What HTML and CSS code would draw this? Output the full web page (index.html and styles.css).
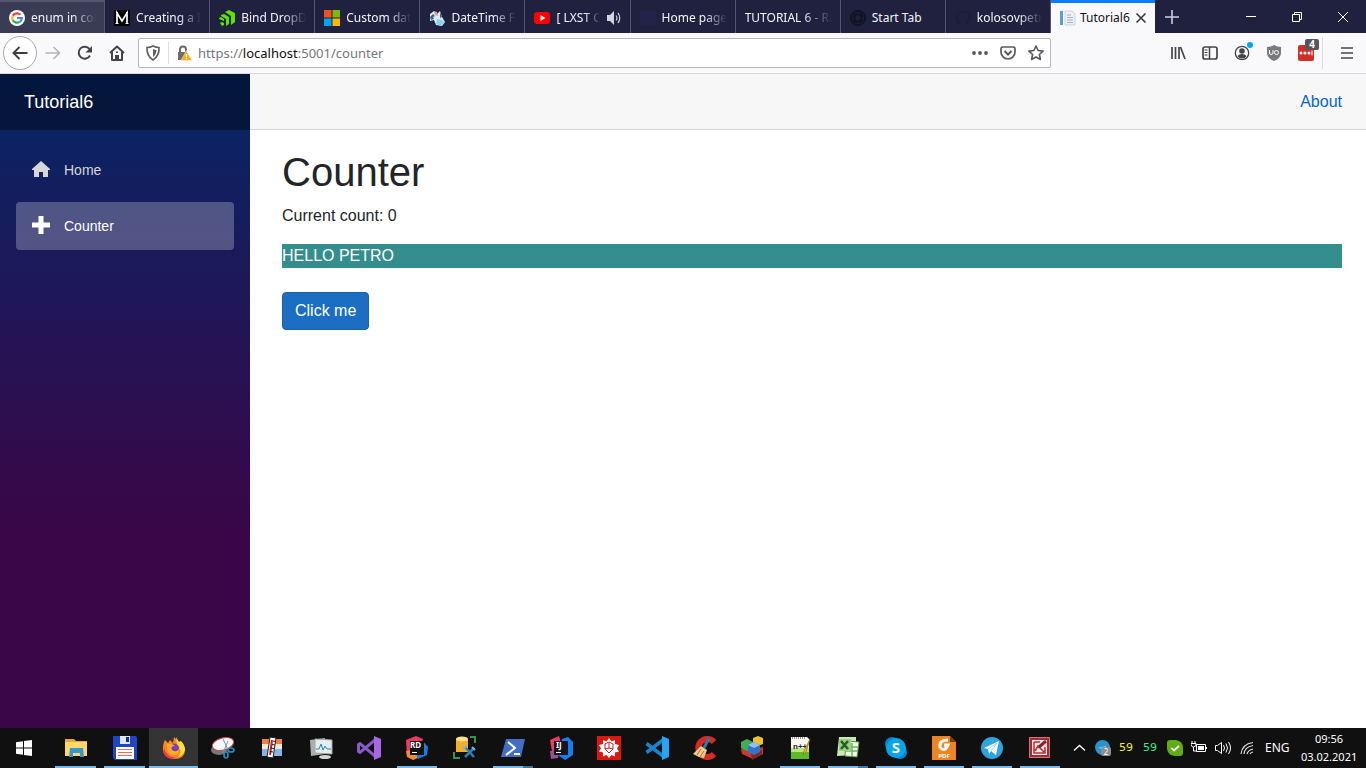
FILE: index.html
```html
<!DOCTYPE html>
<html lang="en">
<head>
<meta charset="utf-8">
<title>Tutorial6</title>
<link rel="stylesheet" href="styles.css">
</head>
<body>
<header class="browser">
  <div class="titlebar">
    <nav class="tabs" aria-label="Open tabs">
      <button class="tab tab-hover"><svg class="fav" viewBox="0 0 16 16"><circle cx="8" cy="8" r="8" fill="#fff"/><g fill="none" stroke-width="2.2"><path d="M3.8 5.8A4.8 4.8 0 0 1 11.4 4.7" stroke="#ea4335"/><path d="M3.8 5.8A4.8 4.8 0 0 0 3.8 10.2" stroke="#fbbc05"/><path d="M3.8 10.2A4.8 4.8 0 0 0 11.2 11.5" stroke="#34a853"/><path d="M11.2 11.5A4.8 4.8 0 0 0 12.8 8H8" stroke="#4285f4"/></g></svg><span class="label">enum in con</span></button>
      <button class="tab"><svg class="fav" viewBox="0 0 16 16"><path fill="#050505" d="M0 0h16v16H0z"/><path d="M3 14V3l5 8 5-8v11" fill="none" stroke="#fff" stroke-width="1.700"/><path d="M1.500 13.500h3m7 0h3M2 2.500h2m8 0h2" stroke="#fff"/></svg><span class="label">Creating a In</span></button>
      <button class="tab"><svg class="fav" viewBox="0 0 16 16"><path fill="#5ce500" d="M6 2 10 0l6 3v9l-4 3V6zM2 5l3-1 5 3v7l-3 2V9L2 6zM0 8l2-1 3 2v2L0 9zM1 13l2-1 2 1v2l-2 1z"/></svg><span class="label">Bind DropDo</span></button>
      <button class="tab"><svg class="fav" viewBox="0 0 16 16"><path fill="#f25022" d="M0 0h7.500v7.500H0z"/><path fill="#7fba00" d="M8.500 0H16v7.500H8.500z"/><path fill="#00a4ef" d="M0 8.500h7.500V16H0z"/><path fill="#ffb900" d="M8.500 8.500H16V16H8.500z"/></svg><span class="label">Custom dat</span></button>
      <button class="tab"><svg class="fav" viewBox="0 0 16 16"><path fill="#dceaf4" d="M1 4 5 1l3 3 3-3 2 6 3 5-3 4-6-1-2-5-4 1z"/><path fill="#e49882" d="m5 1 3 1 1 4-3-1z"/><path fill="#38618a" d="m1 7 3-3 2 2-2 1 1 2-3 1zM11 2l2 5-2 1z"/><path fill="#8bd0ee" d="m8 9 5 1 2 2-3 4-5-2z"/></svg><span class="label">DateTime Fo</span></button>
      <button class="tab"><svg class="fav" viewBox="0 0 16 16"><rect y="2" width="16" height="12" rx="3" fill="red"/><path fill="#fff" d="m6.500 5 5 3-5 3z"/></svg><span class="label">[ LXST CX</span><svg class="sound" viewBox="0 0 16 16"><path fill="#d4d4df" d="M1 5h3l4-4v14l-4-4H1z"/><path d="M10 5.500q2 2.500 0 5M12 3q3.500 5 0 10" fill="none" stroke="#d4d4df" stroke-width="1.200"/></svg></button>
      <button class="tab"><svg class="fav" viewBox="0 0 16 16"><path fill="#21234a" d="M0 1h16v14H0z"/></svg><span class="label">Home page</span></button>
      <button class="tab"><span class="label">TUTORIAL 6 - Ra</span></button>
      <button class="tab"><svg class="fav" viewBox="0 0 16 16" fill="none" stroke="#10111f"><circle cx="8" cy="8" r="7.300" stroke-width="1.300"/><ellipse cx="8" cy="8" rx="3" ry="7"/><ellipse cx="8" cy="8" rx="7" ry="3"/><rect x="4" y="4" width="8" height="8"/></svg><span class="label full">Start Tab</span></button>
      <button class="tab"><svg class="fav" viewBox="0 0 16 16"><path fill="#1d1f30" d="M5.500 15v-3c-2 .5-3-.5-3.500-1.500 1.500.3 2 1.200 3.500.7l.5-1C3 9.500 2 8 2.500 5.500L3 4V2l2 1h6l2-1v2l.5 2c0 2.500-1 3.700-3.500 4.200l.5 1V15A7.500 7.500 0 1 0 5.500 15"/></svg><span class="label">kolosovpetr</span></button>
      <button class="tab tab-active"><svg class="fav" viewBox="0 0 16 16"><path fill="#5d9fc8" d="M0 1h3v14H0z"/><path fill="#edf1f6" stroke="#b7c5d1" stroke-width=".7" d="M5 1h7l3 3v11H5z"/><path stroke="#9db2c3" d="M7 5h4M7 7.500h6M7 10h6M7 12.500h6"/></svg><span class="label full">Tutorial6</span><svg class="close" viewBox="0 0 12 12"><path d="m1.500 1.500 9 9m0-9-9 9" stroke="#333" stroke-width="1.500"/></svg></button>
    </nav>
    <button class="newtab" aria-label="New tab"><svg viewBox="0 0 14 14"><path d="M7 0v14M0 7h14" stroke="#ceced9" stroke-width="1.600"/></svg></button>
    <div class="window">
      <button aria-label="Minimize"><svg viewBox="0 0 10 10"><path d="M0 4.500h10" stroke="#fff"/></svg></button>
      <button aria-label="Restore"><svg viewBox="0 0 10 10"><path d="M.5 2.500h7v7h-7zM2.500 2V.5h7v7H8" fill="none" stroke="#fff"/></svg></button>
      <button aria-label="Close"><svg viewBox="0 0 10 10"><path d="m0 0 10 10M10 0 0 10" stroke="#fff"/></svg></button>
    </div>
  </div>
  <div class="toolbar">
    <button class="tool back" aria-label="Back"><svg viewBox="0 0 16 16"><path d="M15.500 8H1.500M7.500 2 1.500 8l6 6" fill="none" stroke="#3d3d40" stroke-width="1.900"/></svg></button>
    <button class="tool" aria-label="Forward"><svg viewBox="0 0 16 16"><path d="M.5 8h14M8.500 2l6 6-6 6" fill="none" stroke="#b5b5b8" stroke-width="1.600"/></svg></button>
    <button class="tool" aria-label="Reload"><svg viewBox="0 0 16 16"><path d="M13 10.500A6 6 0 1 1 12.500 4" fill="none" stroke="#454548" stroke-width="2"/><path fill="#454548" d="M15 1v6.500H8.500z"/></svg></button>
    <button class="tool" aria-label="Home"><svg viewBox="0 0 16 16"><path d="m1 8 7-6.500L15 8M3 7v8h10V7" fill="none" stroke="#454548" stroke-width="2" stroke-linejoin="round"/><path fill="#454548" d="M6 15v-5h4v5zM7 6.500h2V8H7z"/></svg></button>
    <form class="address">
      <svg class="shield" viewBox="0 0 16 16"><path d="M8 1q3 1.500 6 1.500Q14.500 11 8 15 1.500 11 2 2.500 5 2.500 8 1z" fill="none" stroke="#626266" stroke-width="1.700"/><path fill="#626266" d="M8 4q2 .8 3.500 1-.3 5-3.500 7z"/></svg>
      <span class="rule"></span>
      <svg class="lock" viewBox="0 0 16 16"><path d="M4 7V4.500a3 3 0 0 1 6 0V7" fill="none" stroke="#6b6b70" stroke-width="2"/><path fill="#6b6b70" d="M2 7h9l-3 8H2z"/><path fill="#ffad14" stroke="#fff" stroke-width=".5" d="m10.500 5.500 5.500 10H5z"/><path d="M10.500 9v3m0 1v1.300" stroke="#fff" stroke-width="1.300"/></svg>
      <label class="url" for="url">https://<b>localhost</b>:5001/counter</label>
      <input id="url" class="entry" type="text" aria-label="Address">
      <svg viewBox="0 0 16 16" fill="#59595d"><circle cx="2" cy="8" r="1.900"/><circle cx="8" cy="8" r="1.900"/><circle cx="14" cy="8" r="1.900"/></svg>
      <svg viewBox="0 0 16 16" fill="none" stroke="#59595d" stroke-width="1.700"><path d="M2.500 2h11Q15 2 15 3.500V7A7 7 0 0 1 1 7V3.500Q1 2 2.500 2z"/><path d="m4.500 6 3.500 3.500L11.500 6" stroke-width="2"/></svg>
      <svg viewBox="0 0 16 16" fill="none" stroke="#59595d" stroke-width="1.600" stroke-linejoin="round"><path d="m8 1 2.100 4.500 5 .6-3.700 3.400 1 5L8 12l-4.400 2.500 1-5L.9 6.100l5-.6z"/></svg>
    </form>
    <div class="extensions">
      <button class="tool" aria-label="Library"><svg viewBox="0 0 16 16"><path d="M2 2v12M5.500 2v12M9 2v12M10.500 2 15 14" stroke="#454548" stroke-width="1.700"/></svg></button>
      <button class="tool" aria-label="Sidebars"><svg viewBox="0 0 16 16" fill="none" stroke="#454548"><rect x="1" y="2" width="14" height="12" rx="2" stroke-width="1.700"/><path d="M7.500 2v12" stroke-width="1.500"/><path d="M2.500 5h3m-3 2.500h3m-3 2.500h3"/></svg></button>
      <button class="tool" aria-label="Account"><svg viewBox="0 0 16 16"><circle cx="8" cy="8" r="6.700" fill="none" stroke="#454548" stroke-width="1.300"/><circle cx="8" cy="6" r="2.800" fill="#454548"/><path fill="#454548" d="M3.500 11Q5 9 8 9t4.500 2Q11 13.500 8 13.500T3.500 11"/></svg><span class="dot"></span></button>
      <button class="tool" aria-label="uBlock Origin"><svg viewBox="0 0 16 16"><path fill="#7a7a7d" d="M8 0q3 2 7 2v6q0 5-7 8-7-3-7-8V2q4 0 7-2"/><path d="M3.500 5v3q0 1.500 1.700 1.500T7 8V5" fill="none" stroke="#fff"/><circle cx="10.500" cy="7.500" r="2" fill="none" stroke="#fff"/></svg></button>
      <button class="tool" aria-label="LastPass"><svg viewBox="0 0 16 16"><rect width="16" height="16" rx="2" fill="#d32d27"/><g fill="#fff"><circle cx="3" cy="8" r="1.500"/><circle cx="7" cy="8" r="1.500"/><circle cx="11" cy="8" r="1.500"/><path d="M13.500 5.500h1v5h-1z"/></g></svg><span class="badge">4</span></button>
      <button class="tool menu" aria-label="Menu"><svg viewBox="0 0 16 16"><path d="M2 3h12M2 8h12M2 13h12" stroke="#454548" stroke-width="1.700"/></svg></button>
    </div>
  </div>
</header>
<div class="page">
  <aside class="sidebar">
    <div class="brandbar"><a class="brand" href="#">Tutorial6</a></div>
    <nav class="sidenav">
      <a class="navlink" href="#"><svg viewBox="0 0 18 18"><path fill="currentColor" d="m9 1 9 8v1h-2v7h-5v-5H7v5H2v-7H0V9z"/></svg>Home</a>
      <a class="navlink current" href="#"><svg viewBox="0 0 18 18"><path fill="currentColor" d="M6.500 0h5v6.500H18v5h-6.500V18h-5v-6.500H0v-5h6.500z"/></svg>Counter</a>
    </nav>
  </aside>
  <main class="main">
    <div class="topbar"><a href="#">About</a></div>
    <div class="content">
      <h1>Counter</h1>
      <p>Current count: 0</p>
      <div class="hello">HELLO PETRO</div>
      <button class="primary">Click me</button>
    </div>
  </main>
</div>
<footer class="taskbar">
  <button class="start" aria-label="Start"><svg viewBox="0 0 16 16"><path fill="#fff" d="m0 2.200 7-1v6.300H0zM8 1l8-1v7.500H8zM0 8.500h7v6.300l-7-1zM8 8.500h8V16l-8-1z"/></svg></button>
  <div class="apps">
    <button class="app wide open" aria-label="File Explorer"><svg viewBox="0 0 24 24"><path fill="#e7a82d" d="M1 3h9l2 2h11v8H1z"/><path fill="#ffd76a" d="M1 6h22v14H1z"/><path fill="#3796ce" d="M6 12h13l1 9h-4v-4H9v4H5z"/></svg></button>
    <button class="app wide open" aria-label="Total Commander"><svg viewBox="0 0 24 24"><path fill="#1d45c5" d="M0 0h23l1 2v22H2l-2-2z"/><path fill="#dce7f4" d="M7 0h10v8H7z"/><path fill="#173078" d="M13 1h3v5h-3z"/><path fill="#fff" d="M3 11h18v12H3z"/><path stroke="#e46b68" d="M5 13.500h14M5 16.500h14M5 19.500h14"/></svg></button>
    <button class="app wide active" aria-label="Firefox"><svg viewBox="0 0 24 24"><path fill="#ff8720" d="m3 4 3 3 2-3 3 3 1-6q3 2 4 6l2-2q5 4 5 9 0 9-11 9Q1 22 1 13 1 7 3 4"/><path fill="#ffdf42" d="m14 1 3 5 2-1q4 4 4 9-2 6-7 7 5-6-1-13z"/><path fill="#f3374c" d="M2 10q1 11 13 12Q5 25 2 17z"/><circle cx="12" cy="12.500" r="5" fill="#7b3bc2"/><path fill="#ffab25" d="M5 8h5l3 2q-5 0-3 4 4 3 7-1 0 7-7 6-6-3-5-11"/></svg></button>
    <button class="app wide" aria-label="Snipping Tool"><svg viewBox="0 0 24 24"><ellipse cx="8" cy="14" rx="8" ry="5" fill="#777"/><ellipse cx="12" cy="8" rx="11" ry="6" transform="rotate(-15 12 8)" fill="#f8f8f8" stroke="#c84c52"/><path d="m12 3 6 13M17 5l-5 12" stroke="#81929e"/><g fill="none" stroke="#248dbe" stroke-width="1.700"><ellipse cx="15" cy="19" rx="2" ry="3"/><ellipse cx="20" cy="14" rx="3" ry="2"/></g></svg></button>
    <button class="app wide" aria-label="Temperature monitor"><svg viewBox="0 0 24 24"><path fill="#f47e3e" d="M2 3h20v7H2z"/><path fill="#f2e9dc" d="M2 8h20v5H2z"/><path fill="#83b5e5" d="M2 13h20v7H2z"/><path fill="#fff" stroke="#222" d="m10 1 6 1-3 20-6-1z"/><path d="m12 4-2 15" stroke="#cb1c21" stroke-width="2"/><path d="m13 5 3 .5m-4 3 3 .5m-4 3 3 .5m-4 3 3 .5" stroke="#222"/></svg></button>
    <button class="app wide" aria-label="Performance"><svg viewBox="0 0 24 24"><path fill="#aab0b0" d="m1 4 15-2v16L2 20z"/><path fill="#e7edef" stroke="#a5a5a2" d="m6 3 17 1v14l-17-1z"/><path d="M7 13h3l2-5 2 6 2-4 2 3h4" fill="none" stroke="#268aa8"/><ellipse cx="16" cy="21" rx="6" ry="2" fill="#d4d6d5"/></svg></button>
    <button class="app" aria-label="Visual Studio"><svg viewBox="0 0 24 24"><path d="M18 4 3 16.500l-1.500-1v-7L3 7.500 18 20" fill="none" stroke="#865ac8" stroke-width="3"/><path fill="#a867e5" d="m17 0 7 3v18l-7 3z"/></svg></button>
    <button class="app open" aria-label="Rider"><svg viewBox="0 0 24 24"><path fill="#f33662" d="m1 4 10-4 7 3-9 21-7-4z"/><path fill="#ef8b33" d="m1 15 8-2 4 9-5 2-6-3z"/><path fill="#167ee6" d="m17 4 6 7-1 8-9 4-2-6z"/><path fill="#111" d="M5 5h14v14H5z"/><text x="5" y="12" class="jb">RD</text><path fill="#fff" d="M7 16h5v1H7z"/></svg></button>
    <button class="app" aria-label="SQL Tools"><svg viewBox="0 0 24 24"><path d="M1 16v6h6M17 1h5v6" fill="none" stroke="#3a944f" stroke-width="2"/><path fill="#f2ae28" d="M3 3h12v13H3z"/><ellipse cx="9" cy="3" rx="6" ry="2.500" fill="#ffe18c"/><path d="m12 11 9 10M21 12l-9 9" stroke="#2981bc" stroke-width="2.500"/><path d="m10 13 4-3M19 11l3 3" stroke="#6cb8db" stroke-width="2"/></svg></button>
    <button class="app open multi" aria-label="PowerShell"><svg viewBox="0 0 24 24"><path fill="#426fc4" d="M5 3h19l-4 18H0z"/><path d="m7 6 7 6-9 7M13 18h6" fill="none" stroke="#fff" stroke-width="2"/></svg></button>
    <button class="app" aria-label="IntelliJ IDEA"><svg viewBox="0 0 24 24"><path fill="#f43d65" d="m1 4 9-4 4 14-11 1z"/><path fill="#985391" d="m1 15 10-1-2 8-7 1z"/><path fill="#177ff3" d="m13 3 6-2 5 5v13l-8 5-6-4z"/><path fill="#171519" d="M5 5h14v14H5z"/><text x="7" y="12" class="jb">IJ</text><path fill="#fff" d="M7 16h5v1H7z"/></svg></button>
    <button class="app" aria-label="Mathematica"><svg viewBox="0 0 24 24"><path fill="#db1710" d="M0 0h24v24H0z"/><path fill="#fff" d="m12 2 2.500 3.500L18 4v4l4 1-2 3.500 2 3-4 1v4l-3.500-1.500L12 22l-2.500-3L6 20.500v-4l-4-1 2-3L2 9l4-1V4l3.500 1.500z"/><path d="m8 8 4-2 4 2v5l-4 4-4-4zM12 7v5m-4 1 4-1 4 1" fill="none" stroke="#c91d19"/></svg></button>
    <button class="app" aria-label="Visual Studio Code"><svg viewBox="0 0 24 24"><path d="M18 4 1.500 16.500M1.500 7.500 18 20" stroke="#1687cc" stroke-width="3.500"/><path fill="#29a4f2" d="m17 0 7 3v18l-7 3z"/></svg></button>
    <button class="app" aria-label="CCleaner"><svg viewBox="0 0 24 24"><path d="M21 6A9 9 0 1 0 21 18" fill="none" stroke="#d32b26" stroke-width="6"/><path d="m16 2-5 10" stroke="#287da6" stroke-width="3"/><path fill="#f0cb8e" d="m8 10 6 4-3 8-5-1-6-3z"/><path stroke="#a86f42" d="m8 13-4 6m7-4-4 6"/></svg></button>
    <button class="app" aria-label="Registry Editor"><svg viewBox="0 0 24 24"><path fill="#c93831" d="m1 13 7-3 7 3 8-2v7l-10 5-11-5z"/><path fill="#7d2928" d="m11 18 11-4v4l-10 6z"/><path fill="#43ad51" d="m1 6 6-3 6 3v6l-6 3-6-3z"/><path fill="#efc12d" d="m13 2 5-2 5 2v6l-5 2-5-3z"/><path fill="#3672c8" d="m8 9 6-3 6 3v7l-6 3-6-3z"/><path fill="#8fc2f5" d="m8 9 6-3 6 3-6 3z"/></svg></button>
    <button class="app open" aria-label="Notepad++"><svg viewBox="0 0 24 24"><path fill="#f7f7f0" d="M3 1h16l2 2v20H3z"/><path fill="#b7e87b" d="M3 12h18v4H3z"/><path fill="#5dbb26" d="M3 16h18v7H3z"/><path stroke="#444" stroke-dasharray="1 1" d="M4 2h14"/><text x="5" y="13" class="npp">n++</text><path d="m22 3-6 12-1 4 3-3z" fill="#f1b839" stroke="#8f6524" stroke-width=".7"/></svg></button>
    <button class="app open multi" aria-label="Excel"><svg viewBox="0 0 24 24"><path fill="#c9e8b6" d="M3 1h17v18l-19 1z"/><path fill="#eef8e8" stroke="#559440" d="m10 5 13 1-2 15-12-1z"/><path d="M10 11h12m-12 4h12m-6-8v13" stroke="#76ae65" stroke-width="1.500"/><path fill="#9bd080" d="M3 3h12v12H3z"/><path d="m5 5 7 8m0-8-7 8" stroke="#285c22" stroke-width="2.500"/></svg></button>
    <button class="app open" aria-label="Skype"><svg viewBox="0 0 24 24"><circle cx="8" cy="8" r="7" fill="#0680cc"/><circle cx="16" cy="16" r="7" fill="#0684cf"/><circle cx="12" cy="12" r="10" fill="#05a7e8"/><text x="12" y="17" class="skype">S</text></svg></button>
    <button class="app open" aria-label="Foxit PDF"><svg viewBox="0 0 24 24"><path fill="#ee8523" d="M0 0h18l6 6v18H0z"/><path fill="#7b3d12" d="M18 0v6h6z"/><path d="M16 4q-9 0-8 7 4 6 8-2h-4" fill="none" stroke="#fff" stroke-width="3"/><text x="12" y="22" class="pdf">PDF</text></svg></button>
    <button class="app open" aria-label="Telegram"><svg viewBox="0 0 24 24"><circle cx="12" cy="12" r="11" fill="#2ca5df"/><path fill="#fff" d="m4 12 15-7-3 14-5-4-2 3-1-5z"/><path stroke="#9ed3ec" d="m8 13 9-6-6 8" fill="none"/></svg></button>
    <button class="app open" aria-label="Screen capture"><svg viewBox="0 0 24 24"><path fill="#a42b34" stroke="#d87078" d="M1.500 1.500h20v20h-20z"/><path fill="#f5e9e7" d="M4 4h15v15H4z"/><path d="M6 6h6M6 6v11h11v-6M7 15l3-5 6 6" fill="none" stroke="#b82e36" stroke-width="1.500"/><path d="m11 11 7-6" stroke="#8d2028" stroke-width="3"/></svg></button>
  </div>
  <div class="tray">
    <svg viewBox="0 0 16 16"><path d="m3 10.500 5.500-5 5.500 5" fill="none" stroke="#fff" stroke-width="1.300"/></svg>
    <svg viewBox="0 0 16 16"><circle cx="7.500" cy="7.500" r="7.500" fill="#2993cd"/><path fill="#b9d6e4" d="m3 8 8-2-1 3z"/><rect x="6" y="7" width="10" height="9" rx="2" fill="#8a8e91"/><text x="11" y="15" class="count">2</text></svg>
    <span class="temp yellow">59</span>
    <span class="temp green">59</span>
    <svg viewBox="0 0 16 16"><path fill="#61ad16" d="M0 3q0-3 3-3h6q7 1 7 8v5q0 3-3 3H8q-8-1-8-8z"/><path d="m4.500 8 2.500 2.500L12 6" fill="none" stroke="#fff" stroke-width="1.700"/></svg>
    <svg viewBox="0 0 16 16"><path d="M5.500 4.500h9v7h-9zM15.500 7v2M1 1v2m3-2v2M0 3.500h5v2L3 7H1.500L0 5zM2.500 7v4h3" fill="none" stroke="#fff"/><path fill="#fff" d="M7 6h6v4H7z"/></svg>
    <svg viewBox="0 0 16 16" fill="none" stroke="#fff"><path d="M.5 5.500h2l4-3v11l-4-3h-2zM8.500 5q2 3 0 6M11 3.500q3 4.500 0 9M13.500 2q4 6 0 12"/></svg>
    <svg viewBox="0 0 16 16" fill="none" stroke="#ddd" stroke-width="1.200"><path d="M2 14Q3 4 14 2.500M5 14q.5-7 9-8.500M8 14q1-4 6-5M11 14q.5-1.500 3-2"/></svg>
    <span class="lang">ENG</span>
    <time class="clock">09:56<br>03.02.2021</time>
  </div>
</footer>
</body>
</html>
```
FILE: styles.css
```css
* { box-sizing: border-box; }
body {
  margin: 0;
  height: 100vh;
  display: flex;
  flex-direction: column;
  overflow: hidden;
  font: 16px/24px "Liberation Sans", Arial, sans-serif;
  color: #212529;
}
button { font: inherit; border: 0; padding: 0; background: none; color: inherit; }
a { text-decoration: none; }
svg { display: block; flex: none; width: 16px; height: 16px; }

.browser { font-family: "Noto Sans", sans-serif; border-bottom: 1px solid #d9d9de; }
.titlebar { display: flex; height: 33px; background: #20213f; }
.tabs { display: flex; flex: 0 1 1155px; min-width: 0; }
.tab {
  display: flex;
  align-items: center;
  gap: 6px;
  flex: 1 1 0;
  min-width: 0;
  padding: 2px 8px 0 9px;
  color: #f4f4f8;
  font-size: 12px;
  line-height: 16px;
  border-right: 1px solid #55566f;
}
.tab-hover { background: #3a3b55; box-shadow: inset 0 2px #56576e; }
.tab-active { background: #f9f9fb; color: #111; box-shadow: inset 0 3px #0a7cff; border-right: 0; gap: 4px; }
.label {
  flex: 1;
  min-width: 0;
  overflow: hidden;
  white-space: nowrap;
  text-align: left;
  mask-image: linear-gradient(to right, #000 65%, transparent);
}
.full { mask-image: none; overflow: visible; }
.close { width: 12px; height: 12px; }
.newtab { width: 34px; display: grid; place-items: center; }
.newtab svg { width: 14px; height: 14px; }
.window { display: flex; margin-left: auto; }
.window button { width: 46px; display: grid; place-items: center; }
.window svg { width: 10px; height: 10px; }

.toolbar { display: flex; align-items: center; height: 40px; padding: 0 3px; background: #f9f9fb; }
.tool { position: relative; width: 32px; height: 32px; display: grid; place-items: center; }
.back { width: 34px; height: 34px; border: 1px solid #aaaaae; border-radius: 50%; background: #fff; }
.address {
  display: flex;
  align-items: center;
  gap: 12px;
  flex: 1;
  min-width: 0;
  height: 30px;
  margin: 0 111px 0 5px;
  padding: 0 6px;
  border: 1px solid #b7b7bb;
  border-radius: 2px;
  background: #fff;
}
.shield { margin-right: -5px; }
.rule { width: 1px; height: 22px; background: #dddde0; margin-right: -5px; }
.lock { margin-right: -6px; }
.url { font-size: 13px; color: #77777b; white-space: nowrap; }
.url b { font-weight: 400; color: #0c0c0d; }
.entry { flex: 1; min-width: 0; border: 0; outline: 0; background: none; font: inherit; }
.extensions { display: flex; }
.dot { position: absolute; top: 5px; right: 5px; width: 6px; height: 6px; border-radius: 50%; background: #00a5f2; }
.badge { position: absolute; top: 2px; right: 3px; width: 14px; height: 11px; border-radius: 2px; background: #55555a; color: #fff; font: bold 10px/11px "Noto Sans", sans-serif; }
.menu { width: 41px; padding-left: 8px; border-left: 1px solid #dddde0; }

.page { display: flex; flex: 1; min-height: 0; }
.sidebar { width: 250px; flex: none; background: linear-gradient(180deg, #052767 0%, #3a0647 70%); }
.brandbar { height: 56px; display: flex; align-items: center; padding: 0 24px; background: rgba(0, 0, 0, .4); }
.brand { color: #fff; font-size: 18px; }
.sidenav { display: flex; flex-direction: column; gap: 8px; padding: 16px; }
.navlink { display: flex; align-items: center; gap: 14px; height: 48px; padding: 0 16px; border-radius: 4px; color: #d7d7d7; font-size: 14px; }
.navlink svg { width: 18px; height: 18px; margin-bottom: 2px; }
.current { background: rgba(255, 255, 255, .25); color: #fff; }
.main { flex: 1; min-width: 0; background: #fff; }
.topbar { height: 56px; display: flex; align-items: center; justify-content: flex-end; padding: 0 24px; background: #f7f7f7; border-bottom: 1px solid #d6d5d5; }
.topbar a { color: #0366d6; }
.content { padding: 18px 24px 0 32px; }
h1 { margin: 0 0 8px; font-size: 40px; line-height: 48px; font-weight: 400; }
p { margin: 0 0 16px; }
.hello { margin-bottom: 24px; background: #348e8e; color: #fff; }
.primary { height: 38px; padding: 0 12px; border: 1px solid #1861ac; border-radius: 4px; background: #1b6ec2; color: #fff; }

.taskbar { display: flex; flex: none; height: 40px; background: #101010; color: #fff; font-family: "Noto Sans", sans-serif; }
.start { width: 51px; display: grid; place-items: center; padding-right: 4px; }
.apps { display: flex; flex: 1; }
.app { position: relative; flex: 1; display: grid; place-items: center; }
.wide { flex: 0 0 49px; }
.app svg { width: 24px; height: 24px; }
.active { background: #343434; box-shadow: inset 0 -2px #76b9ed; }
.open::after { content: ""; position: absolute; left: 4px; right: 4px; bottom: 0; height: 2px; background: #76b9ed; }
.multi::after { background: linear-gradient(to right, #76b9ed 30px, #49749a 30px); }
.jb { font: bold 8px "Noto Sans", sans-serif; fill: #fff; }
.npp { font: bold 8px "Liberation Sans", sans-serif; fill: #222; }
.skype { font: bold 15px "Noto Sans", sans-serif; fill: #fff; text-anchor: middle; }
.pdf { font: bold 6px "Noto Sans", sans-serif; fill: #fff; text-anchor: middle; }
.count { font: 8px "Noto Sans", sans-serif; fill: #fff; text-anchor: middle; }
.tray { width: 302px; flex: none; display: flex; align-items: center; gap: 8px; padding-left: 7px; font-size: 12px; }
.temp { width: 16px; font: 11px/16px "DejaVu Sans", sans-serif; }
.yellow { color: #f4e83e; }
.green { color: #3de98b; }
.lang { width: 24px; margin-left: 2px; }
.clock { width: 56px; margin-left: 4px; text-align: center; font-size: 11px; line-height: 18px; white-space: nowrap; }
```
